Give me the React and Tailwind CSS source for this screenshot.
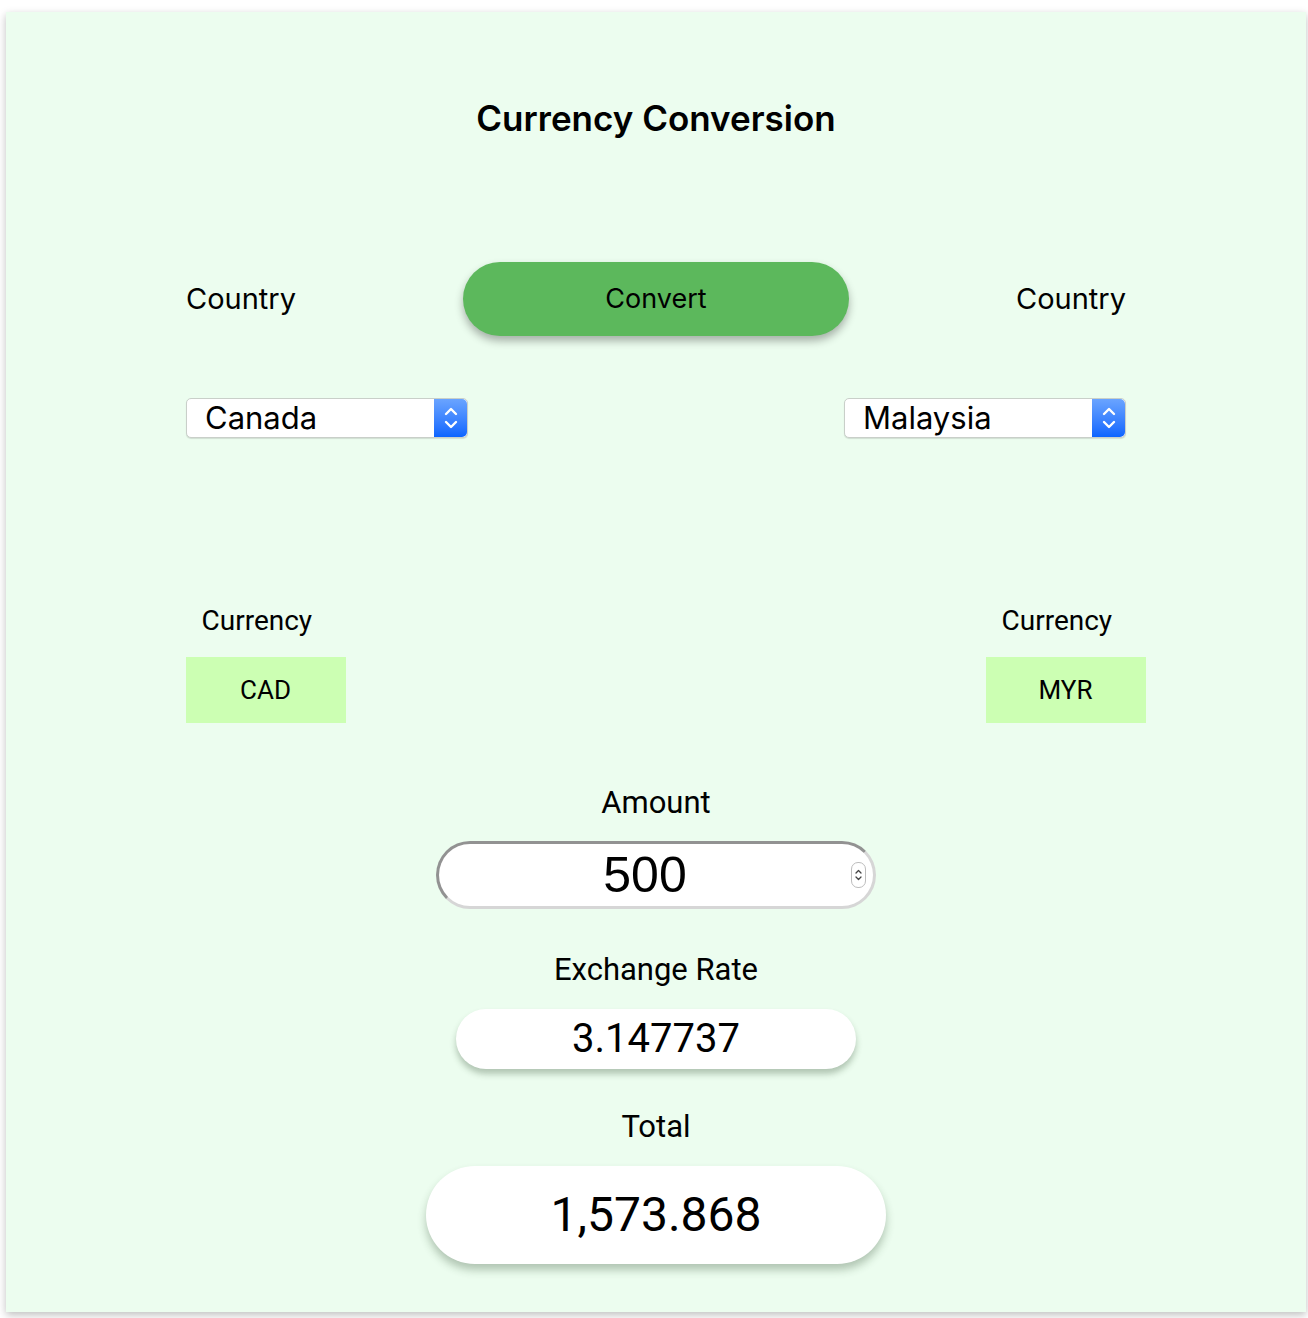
import React from 'react';

const Stepper = () => (
  <div className="w-[33px] self-stretch rounded-r-[5px] bg-gradient-to-b from-[#6aa4ff] to-[#0a64ff] flex items-center justify-center">
    <svg width="16" height="26" viewBox="0 0 16 26" fill="none" stroke="white" strokeWidth="2.4" strokeLinecap="round" strokeLinejoin="round">
      <path d="M3 9 L8 4 L13 9" />
      <path d="M3 17 L8 22 L13 17" />
    </svg>
  </div>
);

const CountrySelect = ({ value }) => (
  <div className="w-[282px] h-[40px] flex items-stretch bg-white rounded-[5px] border border-[#c9cfc9] shadow-[0_1px_1px_rgba(0,0,0,0.12)]">
    <div className="flex-1 flex items-center pl-[18px] text-[31px] text-black font-['Inter',sans-serif]">{value}</div>
    <Stepper />
  </div>
);

const CurrencyBox = ({ code }) => (
  <div className="flex flex-col">
    <div className="pl-4 text-[28px] leading-none text-black font-['Roboto',sans-serif]">Currency</div>
    <div className="mt-[22px] w-[160px] h-[66px] bg-[#ccffb3] flex items-center justify-center text-[26px] text-black font-['Roboto',sans-serif]">
      {code}
    </div>
  </div>
);

const App = () => {
  return (
    <div className="min-h-screen bg-white pt-[12px] pl-[6px]">
      <div className="w-[1300px] h-[1300px] bg-[#ecfdef] shadow-[0_3px_8px_rgba(0,0,0,0.25)] flex flex-col items-center font-['Roboto',sans-serif]">
        <h1 className="mt-[89px] text-[35px] leading-none font-semibold text-black font-['Inter',sans-serif]">
          Currency Conversion
        </h1>

        <div className="w-[940px] mt-[126px] flex items-center justify-between font-['Inter',sans-serif]">
          <span className="text-[29px] text-black">Country</span>
          <button className="w-[386px] h-[74px] rounded-full bg-[#5cb85c] shadow-[0_5px_8px_rgba(0,0,0,0.3)] text-[27px] text-black">
            Convert
          </button>
          <span className="text-[29px] text-black">Country</span>
        </div>

        <div className="w-[940px] mt-[62px] flex justify-between">
          <CountrySelect value="Canada" />
          <CountrySelect value="Malaysia" />
        </div>

        <div className="w-[960px] ml-[19px] mt-[169px] flex justify-between">
          <CurrencyBox code="CAD" />
          <CurrencyBox code="MYR" />
        </div>

        <div className="mt-[64px] text-[31px] leading-none text-black">Amount</div>
        <div className="mt-[23px] w-[440px] h-[68px] rounded-full bg-white border-[3px] border-t-[#929292] border-l-[#929292] border-b-[#d6d6d6] border-r-[#d6d6d6] flex items-center relative">
          <div className="flex-1 text-center text-[50px] leading-none text-black pl-[2px] pr-[24px] font-['Liberation_Sans',Arial,sans-serif]">500</div>
          <div className="absolute right-[7px] top-[18px] w-[15px] h-[26px] rounded-[7px] border border-[#bdbdbd] bg-white flex items-center justify-center">
            <svg width="9" height="18" viewBox="0 0 9 18" fill="none" stroke="#444" strokeWidth="1.3" strokeLinecap="round" strokeLinejoin="round">
              <path d="M2 7 L4.5 4.5 L7 7" />
              <path d="M2 11 L4.5 13.5 L7 11" />
            </svg>
          </div>
        </div>

        <div className="mt-[45px] text-[31px] leading-none text-black">Exchange Rate</div>
        <div className="mt-[24px] w-[400px] h-[60px] rounded-full bg-white shadow-[0_5px_6px_rgba(40,70,40,0.3)] flex items-center justify-center text-[40px] text-black">
          3.147737
        </div>

        <div className="mt-[42px] text-[31px] leading-none text-black">Total</div>
        <div className="mt-[24px] w-[460px] h-[98px] rounded-full bg-white shadow-[0_6px_8px_rgba(40,70,40,0.3)] flex items-center justify-center text-[48px] text-black">
          1,573.868
        </div>
      </div>
    </div>
  );
};

export default App;
